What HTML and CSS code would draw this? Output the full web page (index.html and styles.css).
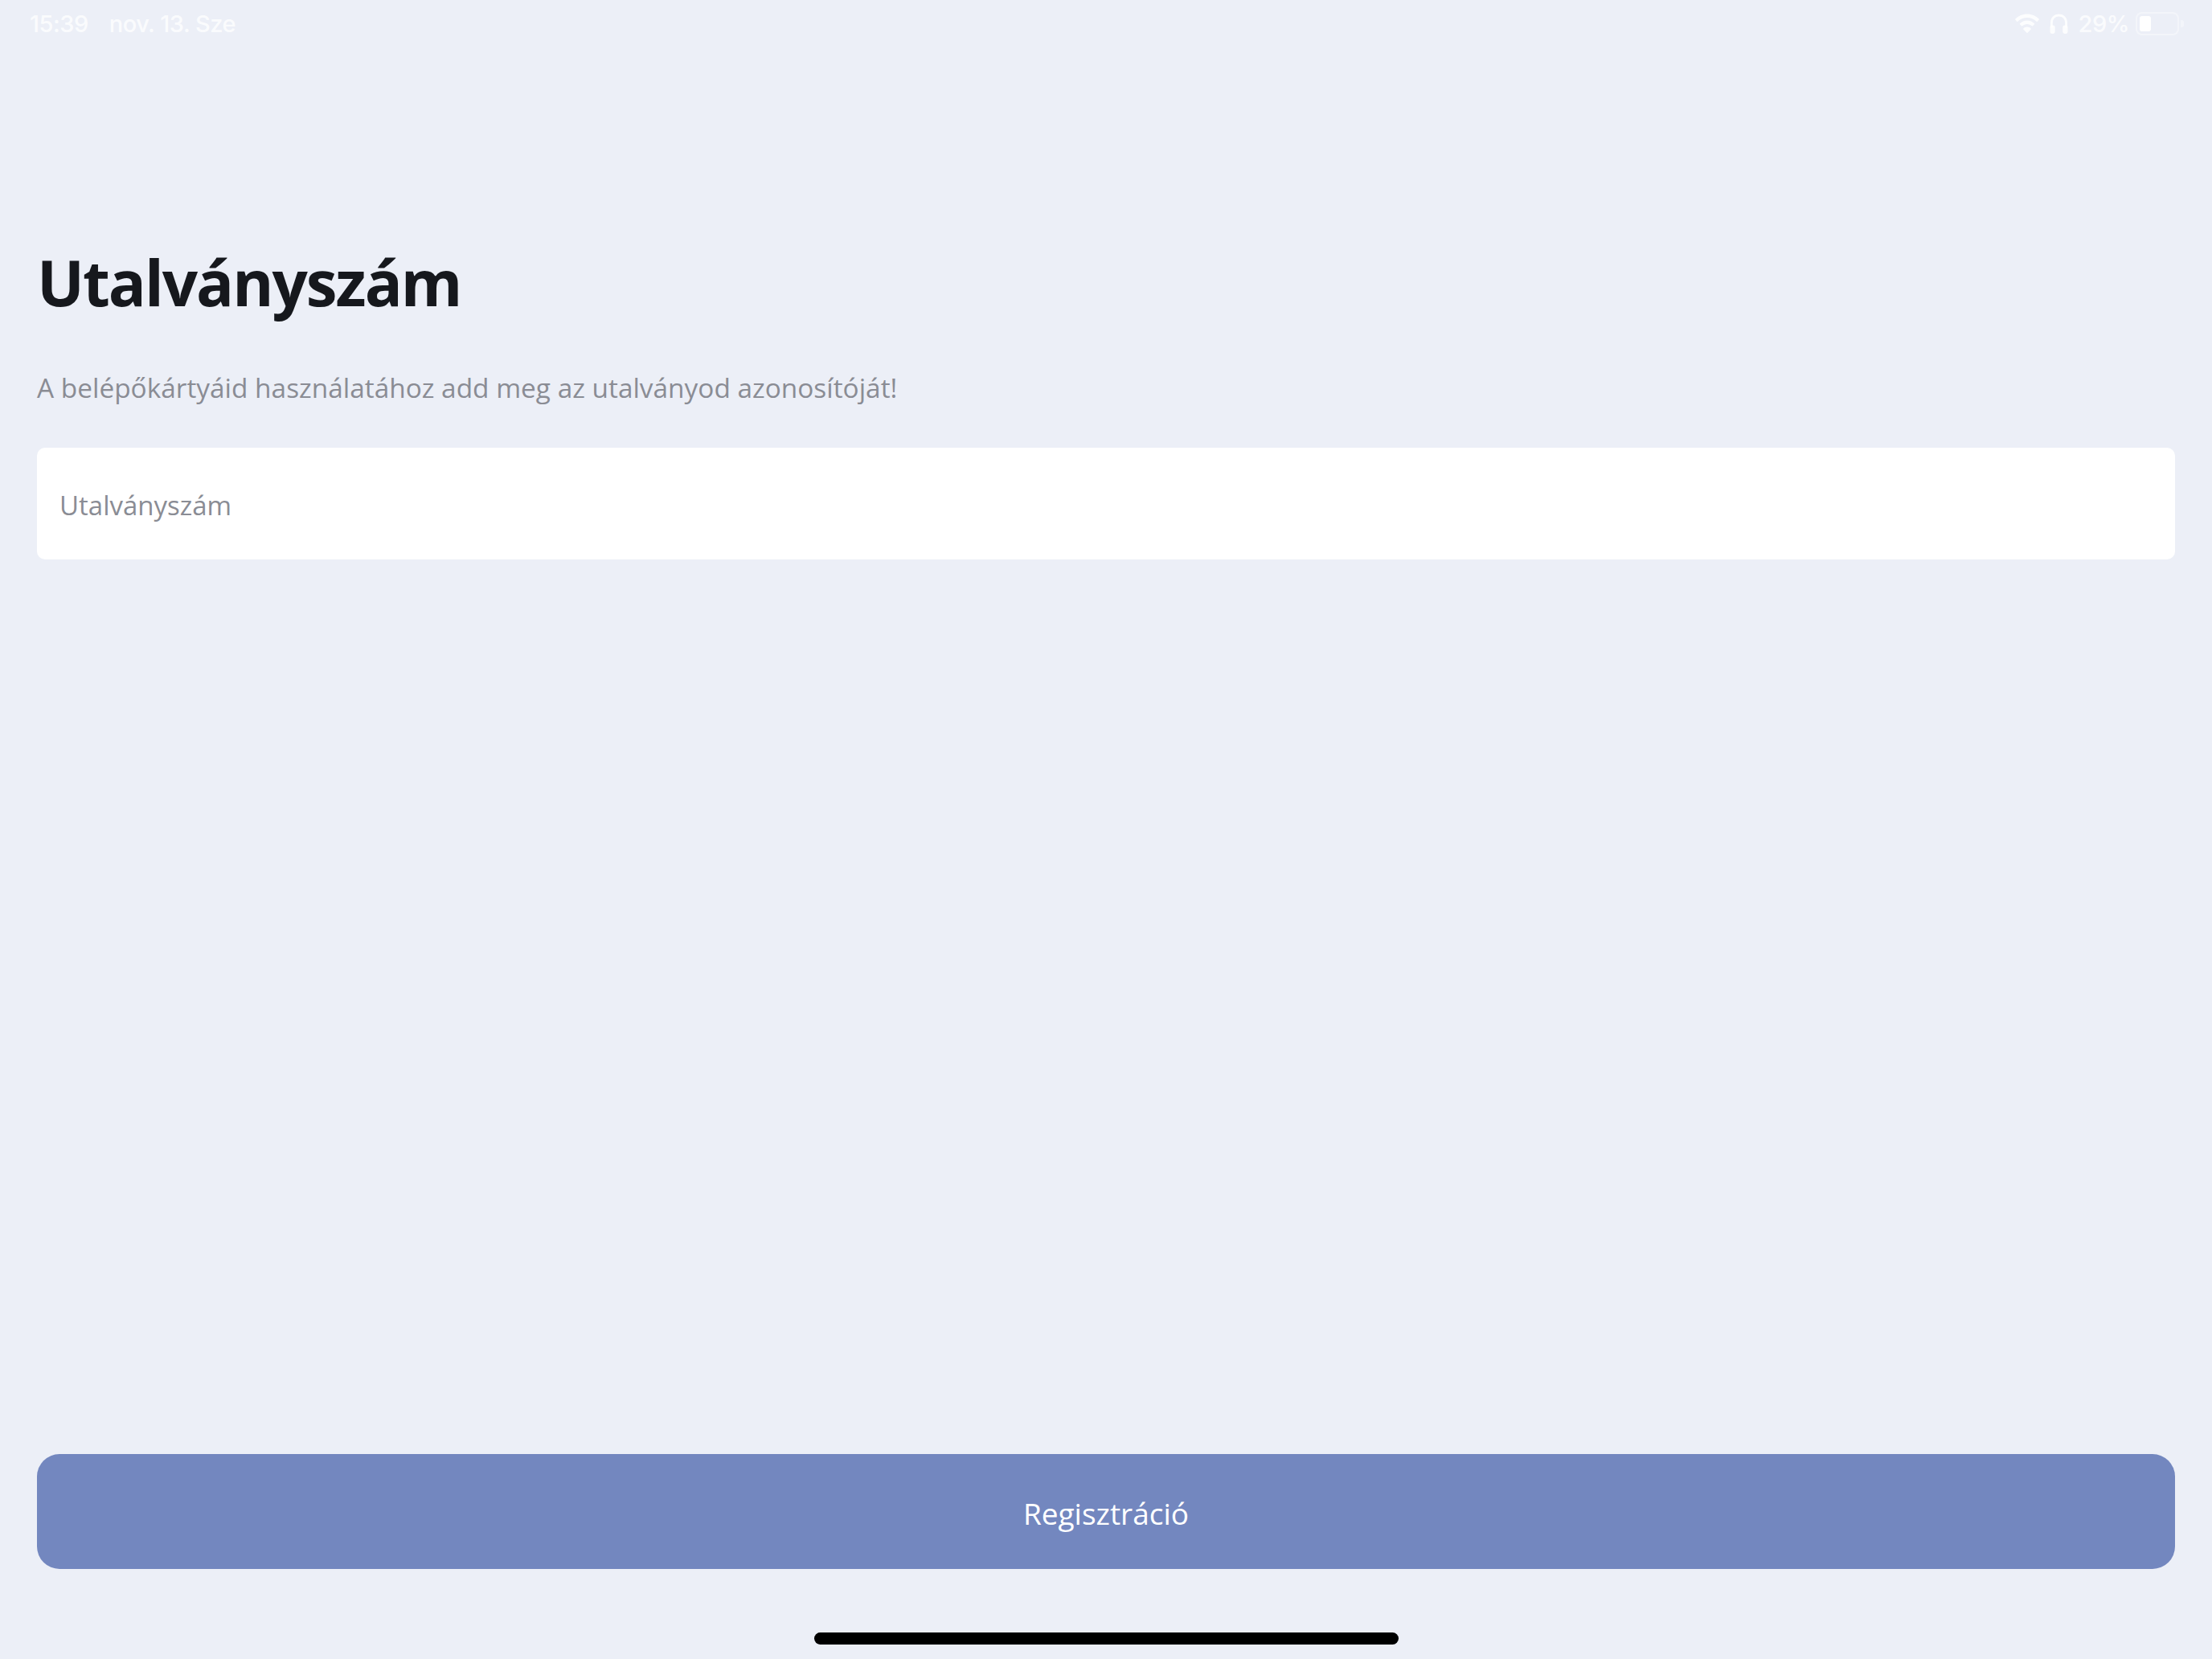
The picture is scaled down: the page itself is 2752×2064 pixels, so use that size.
FILE: index.html
```html
<!DOCTYPE html>
<html lang="hu">
<head>
<meta charset="utf-8">
<title>Utalványszám</title>
<link rel="stylesheet" href="styles.css">
</head>
<body>
<div class="screen">
  <header class="status">
    <div class="status-left">
      <span>15:39</span>
      <span>nov. 13. Sze</span>
    </div>
    <div class="status-right">
      <svg class="icon-wifi" viewBox="0 0 30 24" aria-hidden="true">
        <path class="wifi-fill" d="M15 0C9.2 0 4.1 2.3.3 6.1c-.3.3-.3.7 0 1l2 2.1c.3.3.7.3 1 0C6.3 6.200 10.400 4.400 15 4.400s8.700 1.800 11.700 4.800c.3.3.7.3 1 0l2-2.100c.3-.3.3-.7 0-1C25.900 2.300 20.800 0 15 0z"/>
        <path class="wifi-fill" d="M15 8c-3.500 0-6.700 1.400-9 3.700-.3.3-.3.7 0 1l2 2.100c.3.3.7.3 1 0 1.500-1.500 3.700-2.400 6-2.400s4.500.9 6 2.400c.3.3.7.3 1 0l2-2.100c.3-.3.3-.7 0-1C21.700 9.400 18.500 8 15 8z"/>
        <path class="wifi-fill" d="M15 16c-1.900 0-3.500.7-4.700 1.900-.3.3-.3.7 0 1l4.200 4.400c.3.3.7.3 1 0l4.200-4.400c.3-.3.3-.7 0-1C18.500 16.700 16.900 16 15 16z"/>
      </svg>
      <svg class="icon-phones" viewBox="0 0 24 26" aria-hidden="true">
        <path class="phones-band" d="M2.500 18V12C2.500 6 6.500 2 12 2s9.500 4 9.500 10v6"/>
        <rect class="wifi-fill" x="0.500" y="15" width="6.500" height="11" rx="2.500"/>
        <rect class="wifi-fill" x="17" y="15" width="6.500" height="11" rx="2.500"/>
      </svg>
      <span class="percent">29%</span>
      <div class="battery">
        <div class="battery-body"><div class="battery-level"></div></div>
        <div class="battery-nub"></div>
      </div>
    </div>
  </header>

  <main class="content">
    <h1 class="title">Utalványszám</h1>
    <p class="subtitle">A belépőkártyáid használatához add meg az utalványod azonosítóját!</p>
    <div class="field"><span class="placeholder">Utalványszám</span></div>
  </main>

  <footer class="footer">
    <button class="submit" type="button">Regisztráció</button>
    <div class="home-row"><div class="home-bar"></div></div>
  </footer>
</div>
</body>
</html>
```
FILE: styles.css
```css
* { box-sizing: border-box; }
html, body { margin: 0; padding: 0; }
body {
  width: 2752px;
  height: 2064px;
  overflow: hidden;
  background: #eceff7;
  font-family: "Open Sans", "Noto Sans", sans-serif;
}
.screen {
  height: 2064px;
  display: flex;
  flex-direction: column;
}
.status {
  height: 58px;
  padding: 0 35px 0 37px;
  display: flex;
  justify-content: space-between;
  align-items: center;
  font-family: Inter, "Liberation Sans", sans-serif;
  font-size: 29px;
  font-weight: 500;
  letter-spacing: -0.5px;
  color: rgba(255, 255, 255, 0.8);
}
.status-left { display: flex; gap: 26px; }
.status-right { display: flex; align-items: center; }
.icon-wifi { width: 30px; height: 25px; display: block; }
.wifi-fill { fill: rgba(255, 255, 255, 0.85); }
.icon-phones { width: 23px; height: 25px; margin-left: 13px; display: block; }
.phones-band { fill: none; stroke: rgba(255, 255, 255, 0.85); stroke-width: 3; }
.percent { margin-left: 13px; }
.battery { margin-left: 8px; display: flex; align-items: center; gap: 2px; }
.battery-body {
  width: 54px;
  height: 29px;
  padding: 3px;
  border: 2px solid rgba(255, 255, 255, 0.4);
  border-radius: 8px;
}
.battery-level { width: 14px; height: 100%; background: #fff; border-radius: 3px; }
.battery-nub { width: 4px; height: 9px; background: rgba(255, 255, 255, 0.4); border-radius: 0 3px 3px 0; }
.content {
  flex: 1;
  padding: 0 46px;
  display: flex;
  flex-direction: column;
}
.title {
  margin: 243px 0 0;
  font-size: 78px;
  line-height: 100px;
  font-weight: 700;
  letter-spacing: -2px;
  color: #16181d;
}
.subtitle {
  margin: 59px 0 0;
  font-size: 33.400px;
  line-height: 44px;
  color: #8a8c94;
}
.field {
  margin-top: 53px;
  height: 139px;
  padding: 5px 28px 0;
  display: flex;
  align-items: center;
  background: #fff;
  border-radius: 10px;
}
.placeholder {
  font-size: 33px;
  line-height: 44px;
  color: #8a8c94;
}
.footer {
  padding: 0 46px;
  display: flex;
  flex-direction: column;
}
.submit {
  height: 143px;
  padding: 4px 0 0;
  border: 0;
  border-radius: 28px;
  background: #7387bf;
  color: #fff;
  font-family: inherit;
  font-size: 37px;
  font-weight: 500;
}
.home-row {
  height: 112px;
  padding-top: 79px;
  display: flex;
  justify-content: center;
}
.home-bar { width: 727px; height: 15px; background: #000; border-radius: 8px; }
```
